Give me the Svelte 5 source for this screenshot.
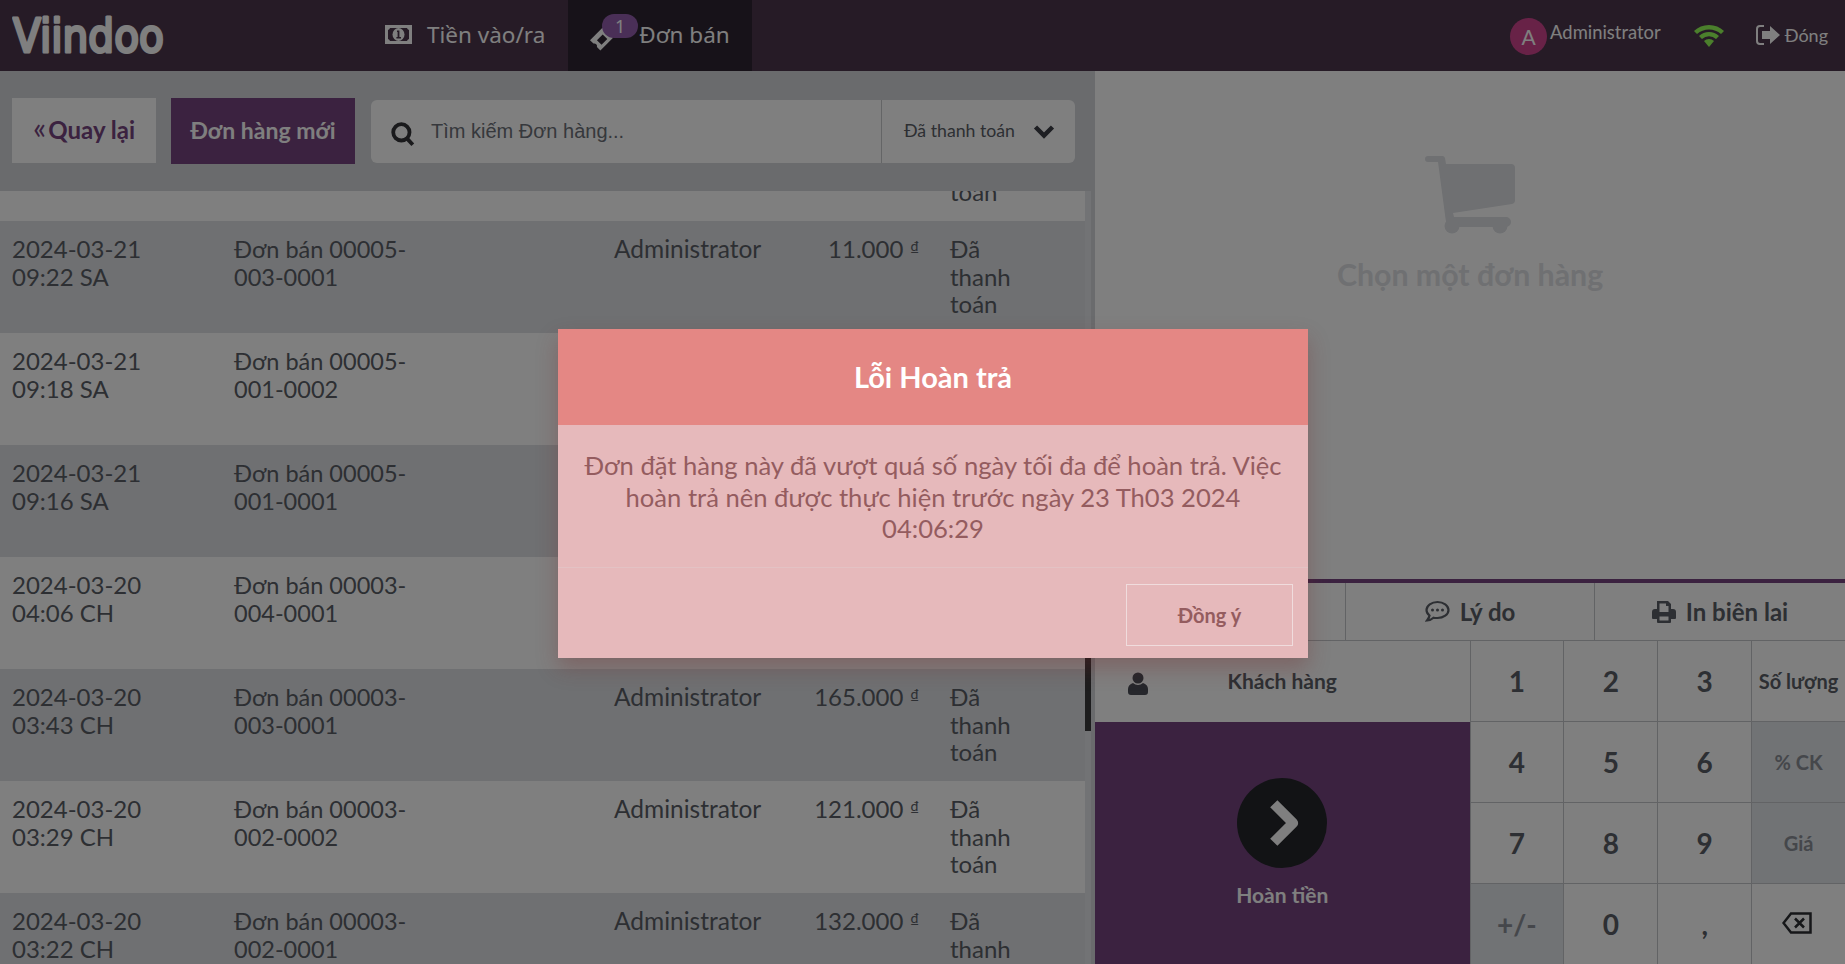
<script lang="ts">
  const orders = [
    { date: '2024-03-21 09:28 SA', name: 'Đơn bán 00005-004-0001', total: '22.000' },
    { date: '2024-03-21 09:22 SA', name: 'Đơn bán 00005-003-0001', total: '11.000' },
    { date: '2024-03-21 09:18 SA', name: 'Đơn bán 00005-001-0002', total: '44.000' },
    { date: '2024-03-21 09:16 SA', name: 'Đơn bán 00005-001-0001', total: '33.000' },
    { date: '2024-03-20 04:06 CH', name: 'Đơn bán 00003-004-0001', total: '55.000' },
    { date: '2024-03-20 03:43 CH', name: 'Đơn bán 00003-003-0001', total: '165.000' },
    { date: '2024-03-20 03:29 CH', name: 'Đơn bán 00003-002-0002', total: '121.000' },
    { date: '2024-03-20 03:22 CH', name: 'Đơn bán 00003-002-0001', total: '132.000' }
  ];

  const keys = [
    { label: '1' }, { label: '2' }, { label: '3' }, { label: 'Số lượng', small: true },
    { label: '4' }, { label: '5' }, { label: '6' }, { label: '% CK', small: true, muted: true },
    { label: '7' }, { label: '8' }, { label: '9' }, { label: 'Giá', small: true, muted: true },
    { label: '+/-', muted: true }, { label: '0' }, { label: ',' }, { label: 'back' }
  ];
</script>

<div class="pos">
  <header class="topbar">
    <div class="logo">
      <svg width="156" height="46" viewBox="0 0 156 46">
        <text x="1" y="39" textLength="151" lengthAdjust="spacingAndGlyphs">Viindoo</text>
      </svg>
    </div>
    <nav class="tabs">
      <div class="tab">
        <svg class="ic-money" width="27" height="19" viewBox="0 0 27 19">
          <path fill-rule="evenodd" d="M0 0h27v19H0zM5 3a3 3 0 0 1-2 2v9a3 3 0 0 1 2 2h17a3 3 0 0 1 2-2V5a3 3 0 0 1-2-2z" />
          <ellipse cx="13.5" cy="9.5" rx="6" ry="6.4" />
          <path class="cut" d="M12 5.500h2.400V12H16v1.400h-4.600V12h1.200V7H12z" />
        </svg>
        <span>Tiền vào/ra</span>
      </div>
      <div class="tab active">
        <svg class="ic-ticket" width="30" height="28" viewBox="0 0 26 24">
          <path fill-rule="evenodd" d="M0 13 11 2l3 3a2.400 2.400 0 0 0 3 3l3 3-11 11-3-3a2.400 2.400 0 0 0-3-3zM6 13l4 4 5-5-4-4z" />
        </svg>
        <span class="badge">1</span>
        <span>Đơn bán</span>
      </div>
    </nav>
    <div class="status">
      <span class="avatar">A</span>
      <span class="user">Administrator</span>
      <svg class="wifi" width="30" height="22" viewBox="0 0 30 22">
        <path d="M15 0c5.800 0 11 2.300 15 6l-3 3a18 18 0 0 0-24 0L0 6c4-3.700 9.200-6 15-6z" />
        <path d="M15 7c3.800 0 7.200 1.500 10 4l-3 3a10.600 10.600 0 0 0-14 0l-3-3c2.800-2.500 6.200-4 10-4z" />
        <path d="M15 14c1.900 0 3.600.7 5 2l-5 6-5-6c1.400-1.300 3.100-2 5-2z" />
      </svg>
      <span class="close">
        <svg width="24" height="22" viewBox="0 0 24 22">
          <path class="door" d="M8 2H4a3 3 0 0 0-3 3v12a3 3 0 0 0 3 3h4" />
          <path d="M6 7h8V2l10 9-10 9v-5H6z" />
        </svg>
        Đóng
      </span>
    </div>
  </header>

  <main class="screen">
    <section class="orders">
      <div class="controls">
        <button class="btn back"><span class="raquo">«</span>Quay lại</button>
        <button class="btn new">Đơn hàng mới</button>
        <div class="search">
          <svg class="ic-search" width="24" height="25" viewBox="0 0 22 23">
            <circle cx="9.500" cy="9.500" r="7.500" />
            <path d="m15 15.500 5 5.500" />
          </svg>
          <span class="placeholder">Tìm kiếm Đơn hàng...</span>
          <div class="filter">
            <span>Đã thanh toán</span>
            <svg width="22" height="15" viewBox="0 0 22 15"><path d="m2.500 3 8.500 8.500L19.500 3" /></svg>
          </div>
        </div>
      </div>
      <div class="list">
        <div class="rows">
          {#each orders as order}
            <div class="row">
              <div class="date">{order.date}</div>
              <div class="name">{order.name}</div>
              <div class="cashier">Administrator</div>
              <div class="total">{order.total} <sup>₫</sup></div>
              <div class="state">Đã thanh toán</div>
            </div>
          {/each}
        </div>
        <div class="scrollbar"><span class="thumb"></span></div>
      </div>
    </section>

    <section class="detail">
      <div class="empty">
        <svg width="90" height="78" viewBox="0 0 90 78">
          <path d="M3 0h14a3 3 0 0 1 3 2l1 6h65a4 4 0 0 1 4 4v32a4 4 0 0 1-3 4l-59 9 1 4h52a3.500 3.500 0 0 1 0 10H25a3.500 3.500 0 0 1-3.500-3l-1-5.500L13 6H3a3 3 0 0 1 0-6z" />
          <circle cx="27" cy="70" r="7.500" />
          <circle cx="75" cy="70" r="7.500" />
        </svg>
        <h2>Chọn một đơn hàng</h2>
      </div>
      <div class="pads">
        <div class="actions">
          <div class="action"></div>
          <div class="action">
            <svg width="25" height="23" viewBox="0 0 25 23">
              <path class="bubble" d="M12.500 2C6.500 2 1.500 5.500 1.500 10c0 2.200 1.200 4.100 3 5.500-.3 2-1.500 3.800-2.500 5 2.700-.3 5-1.400 6.500-2.800 1.300.3 2.700.3 4 .3 6 0 11-3.500 11-8S18.500 2 12.500 2z" />
              <circle cx="7.500" cy="10" r="1.500" /><circle cx="12.500" cy="10" r="1.500" /><circle cx="17.500" cy="10" r="1.500" />
            </svg>
            Lý do
          </div>
          <div class="action">
            <svg width="24" height="22" viewBox="0 0 24 22">
              <path fill-rule="evenodd" d="M5 0h11l3 3v5h2a3 3 0 0 1 3 3v6a1 1 0 0 1-1 1h-4v3a1 1 0 0 1-1 1H6a1 1 0 0 1-1-1v-3H1a1 1 0 0 1-1-1v-6a3 3 0 0 1 3-3h2zM7.500 2.500V11h9V5H14V2.500zM7.500 15.500v4h9v-4z" />
            </svg>
            In biên lai
          </div>
        </div>
        <div class="keyboard">
          <div class="left-col">
            <div class="customer">
              <svg width="20" height="23" viewBox="0 0 20 23">
                <circle cx="10" cy="6" r="5.500" />
                <path d="M5 11c3 2.500 7 2.500 10 0 3 .8 5 3.200 5 6v3a3 3 0 0 1-3 3H3a3 3 0 0 1-3-3v-3c0-2.800 2-5.200 5-6z" />
              </svg>
              <span>Khách hàng</span>
            </div>
            <div class="pay">
              <span class="pay-circle">
                <svg width="34" height="50" viewBox="0 0 30 44"><path d="m6 5 17 17L6 39" /></svg>
              </span>
              <span class="pay-label">Hoàn tiền</span>
            </div>
          </div>
          <div class="numpad">
            {#each keys as key}
              <div class="key" class:small={key.small} class:muted={key.muted}>
                {#if key.label === 'back'}
                  <svg width="30" height="22" viewBox="0 0 30 22">
                    <path d="M9 1.500h19.500v19H9L1.500 11zM13 6.500l9 9M22 6.500l-9 9" />
                  </svg>
                {:else}
                  {key.label}
                {/if}
              </div>
            {/each}
          </div>
        </div>
      </div>
    </section>
  </main>

  <div class="overlay">
    <div class="popup">
      <h3>Lỗi Hoàn trả</h3>
      <p>Đơn đặt hàng này đã vượt quá số ngày tối đa để hoàn trả. Việc hoàn trả nên được thực hiện trước ngày 23 Th03 2024 04:06:29</p>
      <div class="popup-footer">
        <button class="ok">Đồng ý</button>
      </div>
    </div>
  </div>
</div>

<style>
  :global(body) {
    margin: 0;
    font-family: Lato, "Noto Sans", sans-serif;
    overflow: hidden;
  }

  .pos {
    position: relative;
    width: 1845px;
    height: 964px;
    overflow: hidden;
    display: flex;
    flex-direction: column;
    color: #5a5e66;
    background: #fff;
  }

  /* Top bar */
  .topbar {
    flex: 0 0 71px;
    display: flex;
    align-items: stretch;
    background: #4c364c;
    color: #fff;
  }

  .logo {
    width: 372px;
    padding: 13px 0 0 12px;
    box-sizing: border-box;
  }

  .logo text {
    font-family: "DejaVu Sans", sans-serif;
    font-size: 46px;
    fill: #fff;
    stroke: #fff;
    stroke-width: 3;
    stroke-linejoin: round;
  }

  .tabs {
    display: flex;
  }

  .tab {
    position: relative;
    display: flex;
    align-items: center;
    gap: 15px;
    padding: 0 23px 2px 13px;
    font-family: "Noto Sans", Lato, sans-serif;
    font-size: 22.500px;
    fill: #fff;
  }

  .ic-money .cut {
    fill: #4c364c;
  }

  .tab.active {
    width: 184px;
    box-sizing: border-box;
    background: #2e2432;
    padding: 0 0 2px 22px;
    gap: 19px;
  }

  .ic-ticket {
    margin-top: 8px;
  }

  .badge {
    position: absolute;
    left: 34px;
    top: 14px;
    width: 36px;
    height: 24px;
    border-radius: 12px;
    background: #945eae;
    font-size: 18px;
    line-height: 24px;
    text-align: center;
  }

  .status {
    margin-left: auto;
    display: flex;
    align-items: center;
    padding-right: 17px;
    font-size: 18.400px;
  }

  .avatar {
    width: 37px;
    height: 37px;
    border-radius: 50%;
    background: #d0458f;
    font-size: 21px;
    line-height: 37px;
    text-align: center;
    margin-top: 1px;
  }

  .user {
    margin: -8px 33px 0 3px;
  }

  .wifi {
    fill: #96ff58;
    margin-right: 32px;
  }

  .close {
    display: flex;
    align-items: center;
    gap: 5px;
    fill: #fff;
    margin-top: -2px;
    font-size: 18px;
  }

  .close .door {
    fill: none;
    stroke: #fff;
    stroke-width: 2;
  }

  /* Main area */
  .screen {
    flex: 1;
    min-height: 0;
    display: flex;
  }

  .orders {
    width: 1095px;
    display: flex;
    flex-direction: column;
    background: #d4d6da;
  }

  .controls {
    flex: 0 0 120px;
    display: flex;
    align-items: flex-start;
    padding: 27px 20px 0 12px;
    box-sizing: border-box;
  }

  .btn {
    height: 66px;
    border: 0;
    font-family: inherit;
    font-size: 24px;
    font-weight: 700;
    padding: 0 0 3px;
    white-space: nowrap;
  }

  .back {
    width: 144px;
    margin-right: 15px;
    background: #fff;
    color: #764480;
    height: 65px;
  }

  .raquo {
    font-weight: 400;
    font-size: 31px;
    line-height: 24px;
    margin-right: 2px;
  }

  .new {
    width: 184px;
    margin-right: 16px;
    background: #764480;
    color: #fff;
    font-size: 23px;
  }

  .search {
    flex: 1;
    height: 63px;
    margin-top: 2px;
    display: flex;
    align-items: center;
    background: #fff;
    border-radius: 6px;
    padding-left: 20px;
  }

  .ic-search {
    fill: none;
    stroke: #343539;
    stroke-width: 3.500;
    margin-top: 5px;
  }

  .placeholder {
    margin-left: 16px;
    font-family: "Liberation Sans", sans-serif;
    font-size: 20px;
    color: #6c7078;
  }

  .filter {
    margin-left: auto;
    height: 100%;
    width: 194px;
    box-sizing: border-box;
    border-left: 1px solid #c8cacc;
    display: flex;
    align-items: center;
    gap: 18px;
    padding: 0 0 3px 22px;
    font-size: 17.700px;
  }

  .filter svg {
    fill: none;
    stroke: #3c3e46;
    stroke-width: 4.500;
    margin-top: 3px;
  }

  .list {
    position: relative;
    flex: 1;
    min-height: 0;
    overflow: hidden;
    display: flex;
  }

  .rows {
    flex: 0 0 1085px;
    margin-top: -82px;
  }

  .row {
    height: 112px;
    box-sizing: border-box;
    display: grid;
    grid-template-columns: 222px 380px 160px 145px 31px 1fr;
    padding: 14px 0 0 12px;
    font-size: 24px;
    line-height: 27.500px;
    background: #fff;
    overflow: hidden;
  }

  .row:nth-child(even) {
    background: #dee0e4;
  }

  .date {
    width: 140px;
  }

  .name {
    width: 190px;
    padding-top: 1px;
    font-size: 23.500px;
  }

  .cashier {
    font-size: 24.500px;
  }

  .total {
    text-align: right;
    white-space: nowrap;
  }

  .total sup {
    font-size: 14px;
    line-height: 0;
    vertical-align: 7px;
    margin-left: 1px;
  }

  .state {
    grid-column: 6;
    width: 70px;
  }

  .scrollbar {
    flex: 0 0 6px;
    height: 100%;
    background: #e4e6ea;
  }

  .thumb {
    display: block;
    margin-top: 200px;
    height: 340px;
    background: #3a3a3c;
  }

  /* Right side */
  .detail {
    flex: 1;
    min-height: 0;
    display: flex;
    flex-direction: column;
    background: #fff;
  }

  .empty {
    flex: 0 0 508px;
    box-sizing: border-box;
    display: flex;
    flex-direction: column;
    align-items: center;
    padding-top: 85px;
    fill: #dee0e4;
  }

  .empty h2 {
    margin: 21px 0 0;
    font-size: 30.300px;
    line-height: 38px;
    font-weight: 700;
    color: #dee0e4;
  }

  .pads {
    flex: none;
    border-top: 4px solid #764480;
  }

  .actions {
    height: 58px;
    box-sizing: border-box;
    display: grid;
    grid-template-columns: 251px 249px 250px;
    border-bottom: 1px solid #c4c6ca;
  }

  .action {
    display: flex;
    align-items: center;
    justify-content: center;
    gap: 10px;
    font-size: 24px;
    font-weight: 700;
    border-right: 1px solid #c4c6ca;
    fill: #5a5e66;
  }

  .action:last-child {
    border-right: 0;
  }

  .action .bubble {
    fill: none;
    stroke: #5a5e66;
    stroke-width: 2.200;
  }

  .keyboard {
    height: 324px;
    display: flex;
  }

  .left-col {
    width: 374.500px;
    display: flex;
    flex-direction: column;
  }

  .customer {
    height: 81px;
    flex: none;
    position: relative;
    display: flex;
    align-items: center;
    justify-content: center;
    padding-bottom: 2px;
    box-sizing: border-box;
    font-size: 21px;
    font-weight: 700;
    fill: #4c4f58;
  }

  .customer svg {
    position: absolute;
    left: 33px;
    top: 31px;
  }

  .pay {
    flex: 1;
    background: #764480;
    display: flex;
    flex-direction: column;
    align-items: center;
    color: #fff;
    padding-top: 56px;
  }

  .pay-circle {
    width: 90px;
    height: 90px;
    border-radius: 50%;
    background: #24262a;
    display: flex;
    align-items: center;
    justify-content: center;
  }

  .pay-circle svg {
    fill: none;
    stroke: #fff;
    stroke-width: 9;
    stroke-linejoin: round;
    margin-left: 4px;
  }

  .pay-label {
    margin-top: 14px;
    font-size: 21px;
    font-weight: 700;
  }

  .numpad {
    flex: 1;
    display: grid;
    grid-template-columns: repeat(4, 1fr);
    grid-template-rows: repeat(4, 81px);
  }

  .key {
    display: flex;
    align-items: center;
    justify-content: center;
    box-sizing: border-box;
    border-left: 1px solid #c4c6ca;
    border-bottom: 1px solid #c4c6ca;
    font-size: 28px;
    font-weight: 700;
  }

  .key.small {
    font-size: 20px;
  }

  .key.muted {
    background: #e2e6ea;
    color: #8a8e96;
  }

  .key svg {
    fill: none;
    stroke: #2c2e33;
    stroke-width: 2.500;
    margin: -3px 4px 0 0;
  }

  /* Error popup */
  .overlay {
    position: absolute;
    inset: 0;
    background: rgba(0, 0, 0, 0.5);
  }

  .popup {
    position: absolute;
    left: 558px;
    top: 329px;
    width: 750px;
    height: 329px;
    background: #e6b9bb;
    box-shadow: 0 10px 20px rgba(120, 40, 40, 0.3);
    color: #945c5f;
    text-align: center;
  }

  .popup h3 {
    margin: 0;
    height: 96px;
    background: #e48784;
    color: #fff;
    font-size: 29px;
    font-weight: 700;
    line-height: 96px;
  }

  .popup p {
    margin: 0;
    height: 143px;
    box-sizing: border-box;
    padding: 25px 20px 0;
    font-size: 25.600px;
    line-height: 31.700px;
    border-bottom: 1px solid #e3c2c4;
  }

  .popup-footer {
    display: flex;
    justify-content: flex-end;
    padding: 16px 15px 0 0;
  }

  .ok {
    width: 167px;
    height: 62px;
    border: 1px solid #f0dcdd;
    background: transparent;
    color: #945c5f;
    font-family: inherit;
    font-size: 20px;
    font-weight: 700;
    padding: 0;
  }
</style>
